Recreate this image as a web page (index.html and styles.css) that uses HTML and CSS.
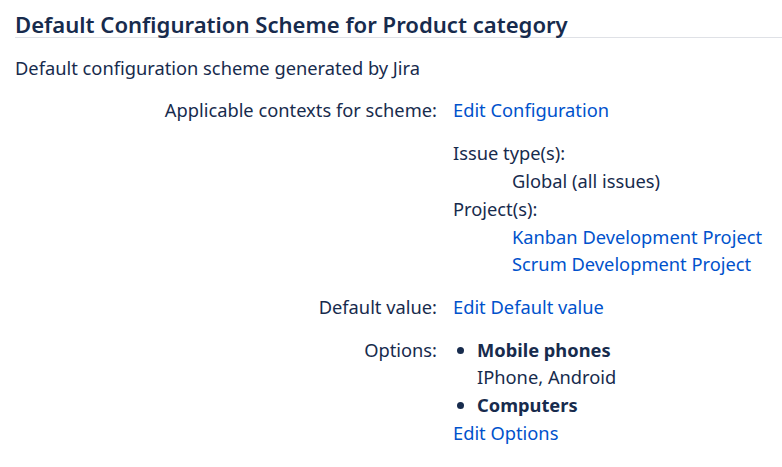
FILE: index.html
```html
<!DOCTYPE html>
<html>
<head>
<meta charset="utf-8">
<link rel="stylesheet" href="styles.css">
</head>
<body>
<h2 class="title">Default Configuration Scheme for Product category</h2>
<p class="desc">Default configuration scheme generated by Jira</p>
<div class="details">
  <div class="label">Applicable contexts for scheme:</div>
  <div class="value">
    <a href="#">Edit Configuration</a>
    <div class="contexts">
      <div>Issue type(s):</div>
      <div class="indent">Global (all issues)</div>
      <div>Project(s):</div>
      <div class="indent"><a href="#">Kanban Development Project</a></div>
      <div class="indent"><a href="#">Scrum Development Project</a></div>
    </div>
  </div>
  <div class="label">Default value:</div>
  <div class="value"><a href="#">Edit Default value</a></div>
  <div class="label">Options:</div>
  <div class="value">
    <ul class="options">
      <li><strong>Mobile phones</strong><div>IPhone, Android</div></li>
      <li><strong>Computers</strong></li>
    </ul>
    <a href="#">Edit Options</a>
  </div>
</div>
</body>
</html>
```
FILE: styles.css
```css
html, body {
  margin: 0;
  padding: 0;
  background: #fff;
}
body {
  padding: 0 0 0 15px;
  font-family: "Noto Sans", "Open Sans", sans-serif;
  font-size: 18.3px;
  line-height: 27.7px;
  color: #172b4d;
}
a {
  color: #0052cc;
  text-decoration: none;
}
.title {
  margin: 0;
  padding: 11px 0 0;
  font-size: 22.1px;
  font-weight: 600;
  line-height: 26px;
  border-bottom: 1px solid #dfe1e6;
}
.desc {
  margin: 16px 0 0;
}
.details {
  display: grid;
  grid-template-columns: 422px 1fr;
  column-gap: 16px;
  row-gap: 15px;
  margin-top: 14px;
}
.label {
  text-align: right;
}
.contexts {
  margin-top: 16px;
}
.indent {
  padding-left: 59px;
}
.options {
  margin: 0;
  padding: 0 0 0 24px;
  list-style: disc;
}
.options strong {
  font-weight: 700;
}
```
